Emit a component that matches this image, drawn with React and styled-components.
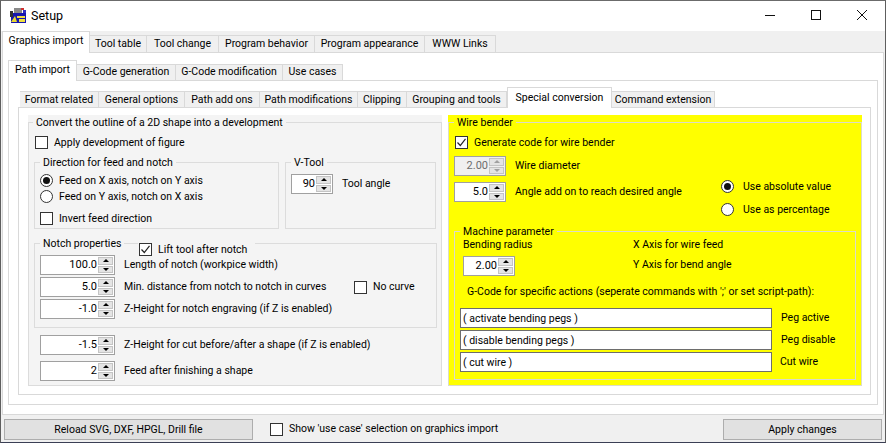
import styled, { createGlobalStyle } from "styled-components";

const GlobalStyle = createGlobalStyle`
  html, body {
    margin: 0;
    padding: 0;
    background: #f0f0f0;
  }
  * {
    box-sizing: border-box;
  }
`;

const Window = styled.div`
  width: 886px;
  height: 443px;
  display: flex;
  flex-direction: column;
  background: #f0f0f0;
  border-top: 1px solid #6b6b6b;
  border-left: 1px solid #5e5e5e;
  border-right: 1px solid #5e5e5e;
  border-bottom: 1px solid #3a3f55;
  font-family: Roboto, "Liberation Sans", sans-serif;
  font-size: 10.5px;
  line-height: 14px;
  color: #000;
  overflow: hidden;
`;
const TitleBar = styled.div`
  height: 30px;
  flex: none;
  display: flex;
  align-items: center;
  background: #fff;
  padding-left: 9px;
`;
const TitleText = styled.span`
  margin-left: 4px;
  font-size: 12.5px;
`;
const IconSvg = styled.svg`
  margin-top: -2px;
`;
const WindowButtons = styled.div`
  margin-left: auto;
  display: flex;
  height: 100%;
  padding-bottom: 2px;
`;
const WindowButton = styled.div`
  width: 46px;
  display: flex;
  align-items: center;
  justify-content: center;
`;
const TabStrip = styled.div`
  display: flex;
  align-items: flex-end;
  margin-bottom: -1px;
  position: relative;
  z-index: 1;
  flex: none;
`;
const Tab = styled.div`
  flex: none;
  width: ${(p) => p.$w}px;
  height: ${(p) => (p.$active ? p.$h + 1 : p.$h - 3)}px;
  display: flex;
  align-items: center;
  justify-content: center;
  white-space: nowrap;
  border: 1px solid #d9d9d9;
  border-left-width: ${(p) => (p.$active ? 1 : 0)}px;
  border-bottom: ${(p) => (p.$active ? "0" : "1px solid #d9d9d9")};
  background: ${(p) => (p.$active ? "#fff" : "#f0f0f0")};
  padding-bottom: ${(p) => p.$pb}px;
  margin-left: ${(p) => p.$ml || 0}px;
`;
const TabPanel = styled.div`
  flex: 1;
  min-height: 0;
  display: flex;
  flex-direction: column;
  background: #fff;
  border: 1px solid #d9d9d9;
`;
const OuterWrap = styled.div`
  flex: none;
  height: 384px;
  margin: 0 1px 0 1px;
  display: flex;
  flex-direction: column;
`;
const OuterBody = styled.div`
  flex: 1;
  min-height: 0;
  display: flex;
  flex-direction: column;
  padding: 7px 5px 9px 5px;
`;
const MiddleBody = styled.div`
  flex: 1;
  min-height: 0;
  display: flex;
  flex-direction: column;
  padding: 6px 6px 9px 9px;
`;
const InnerBody = styled.div`
  flex: 1;
  min-height: 0;
  display: flex;
  gap: 6px;
  padding: 7px 8px 0 9px;
`;
const Column = styled.div`
  width: 414px;
  height: 271px;
  flex: none;
  background: ${(p) => p.$bg};
`;
const Group = styled.fieldset`
  margin: 0;
  min-width: 0;
  position: relative;
  border: 1px solid ${(p) => p.$line || "#dcdcdc"};
  padding: ${(p) => p.$pad || "0 5px"};
  width: ${(p) => (p.$w ? `${p.$w}px` : "auto")};
  height: ${(p) => (p.$h ? `${p.$h}px` : "auto")};
  margin-top: ${(p) => p.$mt || 0}px;
  flex: none;
`;
const Legend = styled.legend`
  padding: 1px 3px 0;
  margin-left: ${(p) => p.$ml || 0}px;
  margin-bottom: -1px;
  line-height: 14px;
  white-space: nowrap;
`;
const CheckLine = styled.label`
  display: flex;
  align-items: center;
  height: 13px;
  gap: 6px;
  white-space: nowrap;
  margin-top: ${(p) => p.$mt || 0}px;
  margin-left: ${(p) => p.$ml || 0}px;
`;
const BoxMark = styled.span`
  width: 13px;
  height: 13px;
  flex: none;
  background: #fff;
  border: 1px solid #333;
  display: flex;
  align-items: center;
  justify-content: center;
`;
const RadioMark = styled.span`
  width: 13px;
  height: 13px;
  flex: none;
  border-radius: 50%;
  background: #fff;
  border: 1px solid #333;
  display: flex;
  align-items: center;
  justify-content: center;
  &::after {
    content: "";
    display: ${(p) => (p.$on ? "block" : "none")};
    width: 7px;
    height: 7px;
    border-radius: 50%;
    background: #111;
  }
`;
const OverBorderCheck = styled.div`
  position: absolute;
  top: -7px;
  left: 103px;
  background: #f4f4f4;
  padding-left: 1px;
  padding-right: 8px;
`;
const Row = styled.div`
  display: flex;
  align-items: ${(p) => p.$align || "center"};
  gap: ${(p) => p.$gap ?? 0}px;
  margin-top: ${(p) => p.$mt || 0}px;
  margin-left: ${(p) => p.$ml || 0}px;
`;
const Label = styled.span`
  white-space: nowrap;
  margin-left: ${(p) => p.$ml ?? 9}px;
  width: ${(p) => (p.$w ? `${p.$w}px` : "auto")};
  flex: none;
`;
const PlainLine = styled.div`
  white-space: nowrap;
  margin-top: ${(p) => p.$mt || 0}px;
  margin-left: ${(p) => p.$ml || 0}px;
`;
const SpinFrame = styled.div`
  width: ${(p) => p.$w}px;
  height: 20px;
  flex: none;
  display: flex;
  align-items: stretch;
  padding: 1px;
  border: 1px solid #a0a0a0;
  background: ${(p) => (p.$off ? "#f0f0f0" : "#fff")};
  color: ${(p) => (p.$off ? "#6d6d6d" : "#000")};
  font-size: 11px;
`;
const SpinValue = styled.div`
  flex: 1;
  text-align: right;
  padding-right: 1px;
  line-height: 16px;
`;
const SpinButtons = styled.div`
  width: 15px;
  flex: none;
  display: flex;
  flex-direction: column;
  gap: 1px;
`;
const SpinButton = styled.div`
  flex: 1;
  background: #e4e4e4;
  border: 1px solid #c4c4c4;
  display: flex;
  align-items: center;
  justify-content: center;
  &::after {
    content: "";
    width: 0;
    height: 0;
    border-left: 3px solid transparent;
    border-right: 3px solid transparent;
    ${(p) =>
      p.$down
        ? `border-top: 3px solid ${p.$off ? "#a0a0a0" : "#000"};`
        : `border-bottom: 3px solid ${p.$off ? "#a0a0a0" : "#000"};`}
  }
`;
const TextField = styled.input`
  width: 312px;
  height: 20px;
  flex: none;
  padding: 0 2px;
  border: 1px solid #6d6d6d;
  background: #fff;
  font: inherit;
  color: #000;
  outline: none;
`;
const Split = styled.div`
  display: flex;
`;
const SpinColumn = styled.div`
  width: 267px;
  flex: none;
`;
const RadioColumn = styled.div`
  display: flex;
  flex-direction: column;
  gap: 10px;
  margin-top: 31px;
`;
const AxisGrid = styled.div`
  display: grid;
  grid-template-columns: 170px auto;
  margin-left: 3px;
`;
const BottomBar = styled.div`
  flex: 1;
  display: flex;
  align-items: center;
  padding: 1px 3px 0 3px;
`;
const PushButton = styled.div`
  height: 21px;
  flex: none;
  width: ${(p) => p.$w}px;
  margin-left: ${(p) => (p.$auto ? "auto" : "0")};
  display: flex;
  align-items: center;
  justify-content: center;
  padding-top: 1px;
  background: #e1e1e1;
  border: 1px solid #adadad;
`;

const Check = ({ on }) => (
  <BoxMark>
    {on && (
      <svg width="11" height="11" viewBox="0 0 11 11">
        <path d="M1.5 5.5 L4.3 8.5 L9.5 1.8" fill="none" stroke="#222" strokeWidth="1.2" />
      </svg>
    )}
  </BoxMark>
);

const Spin = ({ w, value, off }) => (
  <SpinFrame $w={w} $off={off}>
    <SpinValue>{value}</SpinValue>
    <SpinButtons>
      <SpinButton $off={off} />
      <SpinButton $off={off} $down />
    </SpinButtons>
  </SpinFrame>
);

const AppIcon = () => (
  <IconSvg width="17" height="17" viewBox="0 0 17 17">
    <rect x="4" y="1" width="8" height="6" fill="#8a8a8a" />
    <rect x="11" y="1" width="3" height="2" fill="#d03030" />
    <rect x="1" y="6" width="15" height="10" fill="#1616b0" />
    <rect x="0" y="4" width="3" height="6" fill="#333" />
    <rect x="13" y="3" width="3" height="3" fill="#3030c0" />
    <rect x="7" y="9" width="8" height="2" fill="#f0e040" />
    <rect x="9" y="12" width="6" height="3" fill="#f0e040" />
    <path d="M1 15 L5 9 L7 15 Z" fill="#e8d830" />
  </IconSvg>
);

const outerTabs = [
  ["Graphics import", 88, true],
  ["Tool table", 57],
  ["Tool change", 72],
  ["Program behavior", 96],
  ["Program appearance", 110],
  ["WWW Links", 71],
];
const middleTabs = [
  ["Path import", 69, true],
  ["G-Code generation", 99],
  ["G-Code modification", 107],
  ["Use cases", 60],
];
const innerTabs = [
  ["Format related", 79],
  ["General options", 86],
  ["Path add ons", 75],
  ["Path modifications", 98],
  ["Clipping", 49],
  ["Grouping and tools", 100],
  ["Special conversion", 105, true],
  ["Command extension", 103],
];

const Tabs = ({ items, h, first = 0, activePad, restPad }) => (
  <TabStrip>
    {items.map(([text, w, active], i) => (
      <Tab
        key={text}
        $w={w}
        $h={h}
        $active={active}
        $ml={i === 0 ? first : 0}
        $pb={active ? activePad : restPad}
      >
        {text}
      </Tab>
    ))}
  </TabStrip>
);

function App() {
  return (
    <Window>
      <GlobalStyle />
      <TitleBar>
        <AppIcon />
        <TitleText>Setup</TitleText>
        <WindowButtons>
          <WindowButton>
            <svg width="10" height="10" viewBox="0 0 10 10">
              <path d="M0 5.5 H10" stroke="#111" />
            </svg>
          </WindowButton>
          <WindowButton>
            <svg width="10" height="10" viewBox="0 0 10 10">
              <rect x="0.5" y="0.5" width="9" height="9" fill="none" stroke="#111" />
            </svg>
          </WindowButton>
          <WindowButton>
            <svg width="10" height="10" viewBox="0 0 10 10">
              <path d="M0 0 L10 10 M10 0 L0 10" stroke="#111" />
            </svg>
          </WindowButton>
        </WindowButtons>
      </TitleBar>

      <OuterWrap>
        <Tabs items={outerTabs} h={21} activePad={4} restPad={1} />
        <TabPanel>
          <OuterBody>
            <Tabs items={middleTabs} h={20} activePad={2} restPad={1} />
            <TabPanel>
              <MiddleBody>
                <Tabs items={innerTabs} h={20} first={2} activePad={1} restPad={0} />
                <TabPanel>
                  <InnerBody>
                    <Column $bg="#f4f4f4">
                      <Group $h={271} $pad="0 4px 0 5px">
                        <Legend $ml={-1}>Convert the outline of a 2D shape into a development</Legend>
                        <CheckLine $mt={7} $ml={1}>
                          <Check />
                          Apply development of figure
                        </CheckLine>
                        <Row $align="flex-start" $gap={6} $mt={6}>
                          <Group $w={245} $h={74}>
                            <Legend>Direction for feed and notch</Legend>
                            <CheckLine $mt={5}>
                              <RadioMark $on />
                              Feed on X axis, notch on Y axis
                            </CheckLine>
                            <CheckLine $mt={3}>
                              <RadioMark />
                              Feed on Y axis, notch on X axis
                            </CheckLine>
                            <CheckLine $mt={9}>
                              <Check />
                              Invert feed direction
                            </CheckLine>
                          </Group>
                          <Group $w={151} $h={74}>
                            <Legend>V-Tool</Legend>
                            <Row $mt={5}>
                              <Spin w={42} value="90" />
                              <Label>Tool angle</Label>
                            </Row>
                          </Group>
                        </Row>
                        <Group $h={92} $mt={7}>
                          <Legend>Notch properties</Legend>
                          <OverBorderCheck>
                            <CheckLine>
                              <Check on />
                              Lift tool after notch
                            </CheckLine>
                          </OverBorderCheck>
                          <Row $mt={5}>
                            <Spin w={75} value="100.0" />
                            <Label>Length of notch (workpice width)</Label>
                          </Row>
                          <Row $mt={2}>
                            <Spin w={75} value="5.0" />
                            <Label $w={230}>Min. distance from notch to notch in curves</Label>
                            <CheckLine>
                              <Check />
                              No curve
                            </CheckLine>
                          </Row>
                          <Row $mt={2}>
                            <Spin w={75} value="-1.0" />
                            <Label>Z-Height for notch engraving (if Z is enabled)</Label>
                          </Row>
                        </Group>
                        <Row $mt={7} $ml={6}>
                          <Spin w={75} value="-1.5" />
                          <Label>Z-Height for cut before/after a shape (if Z is enabled)</Label>
                        </Row>
                        <Row $mt={6} $ml={6}>
                          <Spin w={75} value="2" />
                          <Label>Feed after finishing a shape</Label>
                        </Row>
                      </Group>
                    </Column>

                    <Column $bg="#ffff00">
                      <Group $h={271} $line="#dcdcc8">
                        <Legend>Wire bender</Legend>
                        <CheckLine $mt={7} $ml={1}>
                          <Check on />
                          Generate code for wire bender
                        </CheckLine>
                        <Split>
                          <SpinColumn>
                            <Row $mt={7}>
                              <Spin w={52} value="2.00" off />
                              <Label>Wire diameter</Label>
                            </Row>
                            <Row $mt={6}>
                              <Spin w={52} value="5.0" />
                              <Label>Angle add on to reach desired angle</Label>
                            </Row>
                          </SpinColumn>
                          <RadioColumn>
                            <CheckLine>
                              <RadioMark $on />
                              <Label $ml={3}>Use absolute value</Label>
                            </CheckLine>
                            <CheckLine>
                              <RadioMark />
                              <Label $ml={3}>Use as percentage</Label>
                            </CheckLine>
                          </RadioColumn>
                        </Split>
                        <Group $h={156} $mt={8} $line="#dcdcc8">
                          <Legend>Machine parameter</Legend>
                          <AxisGrid>
                            <div>
                              <PlainLine>Bending radius</PlainLine>
                              <Row $mt={4}>
                                <Spin w={52} value="2.00" />
                              </Row>
                            </div>
                            <div>
                              <PlainLine>X Axis for wire feed</PlainLine>
                              <PlainLine $mt={6}>Y Axis for bend angle</PlainLine>
                            </div>
                          </AxisGrid>
                          <PlainLine $mt={9} $ml={7}>
                            G-Code for specific actions (seperate commands with ';' or set script-path):
                          </PlainLine>
                          <Row $mt={9}>
                            <TextField readOnly value="( activate bending pegs )" />
                            <Label>Peg active</Label>
                          </Row>
                          <Row $mt={2}>
                            <TextField readOnly value="( disable bending pegs )" />
                            <Label>Peg disable</Label>
                          </Row>
                          <Row $mt={2}>
                            <TextField readOnly value="( cut wire )" />
                            <Label $ml={8}>Cut wire</Label>
                          </Row>
                        </Group>
                      </Group>
                    </Column>
                  </InnerBody>
                </TabPanel>
              </MiddleBody>
            </TabPanel>
          </OuterBody>
        </TabPanel>
      </OuterWrap>

      <BottomBar>
        <PushButton $w={249}>Reload SVG, DXF, HPGL, Drill file</PushButton>
        <CheckLine $ml={17}>
          <Check />
          Show 'use case' selection on graphics import
        </CheckLine>
        <PushButton $w={159} $auto>
          Apply changes
        </PushButton>
      </BottomBar>
    </Window>
  );
}

export default App;
